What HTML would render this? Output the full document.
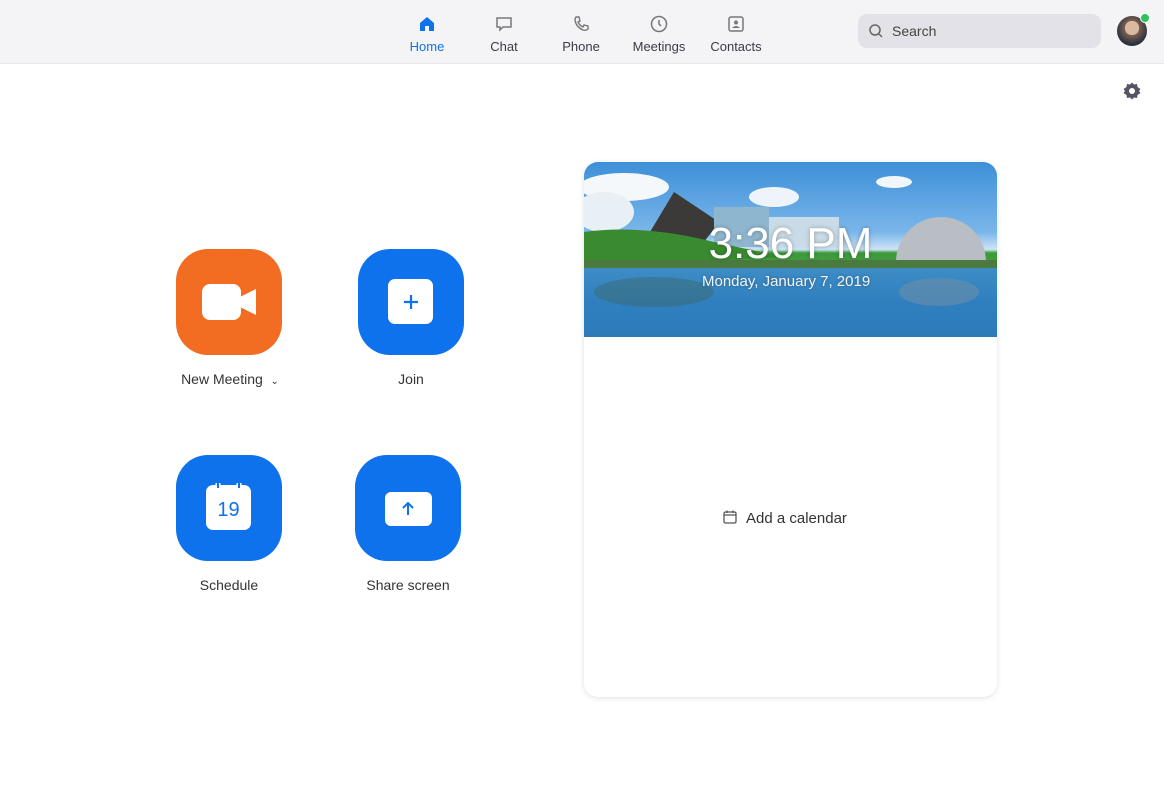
<!DOCTYPE html>
<html><head><meta charset="utf-8"><style>
*{margin:0;padding:0;box-sizing:border-box}
body{width:1164px;height:800px;background:#fff;font-family:"Liberation Sans",sans-serif;position:relative;overflow:hidden;color:#333}
.top{position:absolute;left:0;top:0;width:1164px;height:64px;background:#f4f4f6;border-bottom:1px solid #e8e8ec}
.nav{position:absolute;top:14px;text-align:center;font-size:13px;color:#3a3a48;width:70px}
.nav svg{display:block;margin:0 auto 5px}
.search{position:absolute;left:858px;top:14px;width:243px;height:34px;border-radius:9px;background:#e2e2e8;font-size:14px;color:#444;padding:9px 0 0 34px}
.btn{position:absolute;width:106px;height:106px;border-radius:32px;background:#0e72ed}
.lbl{position:absolute;font-size:14px;color:#333;text-align:center;width:160px}
.card{position:absolute;left:584px;top:162px;width:413px;height:535px;border-radius:14px;background:#fff;box-shadow:0 1px 6px rgba(0,0,0,.12);overflow:hidden}
</style></head><body>
<div class="top">
<div class="nav" style="left:392px;color:#0e72ed"><svg width="20" height="20" viewBox="0 0 20 20"><path d="M3 9 L10 3 L17 9 V17 H12 V12 H8 V17 H3Z" fill="#0e72ed"/></svg>Home</div>
<div class="nav" style="left:469px"><svg width="20" height="20" viewBox="0 0 20 20"><path d="M3 4 H17 V13 H9 L6 16 V13 H3Z" fill="none" stroke="#777" stroke-width="1.5"/></svg>Chat</div>
<div class="nav" style="left:546px"><svg width="20" height="20" viewBox="0 0 20 20"><path d="M5 3 L8 3 L9 7 L7 8 Q9 12 12 13 L13 11 L17 12 L17 15 Q15 17 12 16 Q5 13 4 6 Q4 4 5 3Z" fill="none" stroke="#777" stroke-width="1.4"/></svg>Phone</div>
<div class="nav" style="left:624px"><svg width="20" height="20" viewBox="0 0 20 20"><circle cx="10" cy="10" r="7.5" fill="none" stroke="#777" stroke-width="1.5"/><path d="M10 6 V10 L12 12" fill="none" stroke="#777" stroke-width="1.5"/></svg>Meetings</div>
<div class="nav" style="left:701px"><svg width="20" height="20" viewBox="0 0 20 20"><rect x="3" y="3" width="14" height="14" rx="2" fill="none" stroke="#777" stroke-width="1.5"/><circle cx="10" cy="8.5" r="2" fill="#777"/><path d="M6 14 Q10 10 14 14Z" fill="#777"/></svg>Contacts</div>
<div class="search"><svg style="position:absolute;left:10px;top:9px" width="16" height="16" viewBox="0 0 16 16"><circle cx="7" cy="7" r="5" fill="none" stroke="#666" stroke-width="1.5"/><path d="M11 11 L14 14" stroke="#666" stroke-width="1.5"/></svg>Search</div>
<div style="position:absolute;left:1117px;top:16px;width:30px;height:30px;border-radius:50%;background:radial-gradient(circle at 50% 40%,#d9b9a0 0 30%,#7a6050 31%,#2a3040 70%);"></div>
<div style="position:absolute;left:1140px;top:13px;width:10px;height:10px;border-radius:50%;background:#2dc25b;border:1px solid #fff"></div>
</div>
<svg style="position:absolute;left:1122px;top:81px" width="20" height="20" viewBox="0 0 20 20"><path d="M10 1.5 L12 3.5 L15 3 L15.5 6 L18.5 8 L17 10 L18.5 12 L15.5 14 L15 17 L12 16.5 L10 18.5 L8 16.5 L5 17 L4.5 14 L1.5 12 L3 10 L1.5 8 L4.5 6 L5 3 L8 3.5Z" fill="#555464"/><circle cx="10" cy="10" r="3" fill="#fff"/></svg>

<div class="btn" style="left:176px;top:249px;background:#f26d21"><div style="position:absolute;left:26px;top:35px;width:39px;height:36px;background:#fff;border-radius:8px"></div><svg style="position:absolute;left:62px;top:38px" width="20" height="30" viewBox="0 0 20 30"><path d="M2 10 L18 2 V28 L2 20Z" fill="#fff"/></svg></div>
<div class="lbl" style="left:150px;top:371px">New Meeting &nbsp;<span style="font-size:10px">&#8964;</span></div>
<div class="btn" style="left:358px;top:249px"><div style="position:absolute;left:30px;top:30px;width:45px;height:45px;background:#fff;border-radius:7px"></div><svg style="position:absolute;left:43px;top:43px" width="20" height="20"><path d="M10 3V17M3 10H17" stroke="#0e72ed" stroke-width="2.2"/></svg></div>
<div class="lbl" style="left:331px;top:371px">Join</div>
<div class="btn" style="left:176px;top:455px"><div style="position:absolute;left:30px;top:30px;width:45px;height:45px;background:#fff;border-radius:7px"></div><svg style="position:absolute;left:30px;top:26px" width="45" height="12"><path d="M12 2V8M33 2V8" stroke="#fff" stroke-width="5"/><path d="M12 1V7M33 1V7" stroke="#0e72ed" stroke-width="2" fill="none"/></svg><div style="position:absolute;left:30px;top:44px;width:45px;text-align:center;color:#0e72ed;font-size:20px">19</div></div>
<div class="lbl" style="left:149px;top:577px">Schedule</div>
<div class="btn" style="left:355px;top:455px"><div style="position:absolute;left:30px;top:37px;width:47px;height:34px;background:#fff;border-radius:6px"></div><svg style="position:absolute;left:43px;top:44px" width="20" height="20"><path d="M10 16V4M5 9L10 4L15 9" stroke="#0e72ed" stroke-width="2" fill="none"/></svg></div>
<div class="lbl" style="left:328px;top:577px">Share screen</div>

<div class="card">
<div style="position:absolute;left:0;top:0;width:413px;height:175px;background:linear-gradient(#3d8fd8 0%,#7ab6ea 40%,#cfe4f5 50%,#3a9a3a 52%,#4a9a40 58%,#3e8dc6 60%,#2f7fbf 80%,#2e7ab8 100%);overflow:hidden">
<svg width="413" height="175" style="position:absolute;left:0;top:0">
<ellipse cx="40" cy="25" rx="45" ry="14" fill="#f4f8fb"/><ellipse cx="20" cy="50" rx="30" ry="20" fill="#e8f0f6"/><ellipse cx="190" cy="35" rx="25" ry="10" fill="#eef4f9"/><ellipse cx="310" cy="20" rx="18" ry="6" fill="#f0f6fa"/>
<path d="M60 80 L90 30 L135 60 L120 80Z" fill="#3b3a38"/>
<rect x="130" y="45" width="55" height="40" fill="#8fb6cf"/><rect x="185" y="55" width="70" height="30" fill="#c9dbe6"/>
<path d="M312 100 A45 45 0 0 1 402 100Z" fill="#b8bec4"/>
<path d="M0 70 Q60 62 130 80 L200 95 L0 105Z" fill="#3a8a30"/>
<rect x="0" y="98" width="413" height="8" fill="#4a7a40"/>
<ellipse cx="355" cy="130" rx="40" ry="14" fill="#6a8ea8" opacity=".6"/>
<ellipse cx="70" cy="130" rx="60" ry="15" fill="#3c6a70" opacity=".5"/>
</svg>
<div style="position:absolute;left:0;width:413px;top:57px;text-align:center;color:#fff;font-size:44px;font-weight:300;text-shadow:0 0 4px rgba(0,0,0,.3)">3:36 PM</div>
<div style="position:absolute;left:118px;top:111px;color:#f4f4f4;font-size:15px;text-shadow:0 0 3px rgba(0,0,0,.3)">Monday, January 7, 2019</div>
</div>
<div style="position:absolute;left:138px;top:347px;font-size:15px;color:#333"><svg style="vertical-align:-2px;margin-right:8px" width="16" height="16" viewBox="0 0 16 16"><rect x="2" y="3" width="12" height="11" rx="1.5" fill="none" stroke="#555" stroke-width="1.3"/><path d="M2 6H14M5 1.5V4M11 1.5V4" stroke="#555" stroke-width="1.3"/></svg>Add a calendar</div>
</div>
</body></html>
